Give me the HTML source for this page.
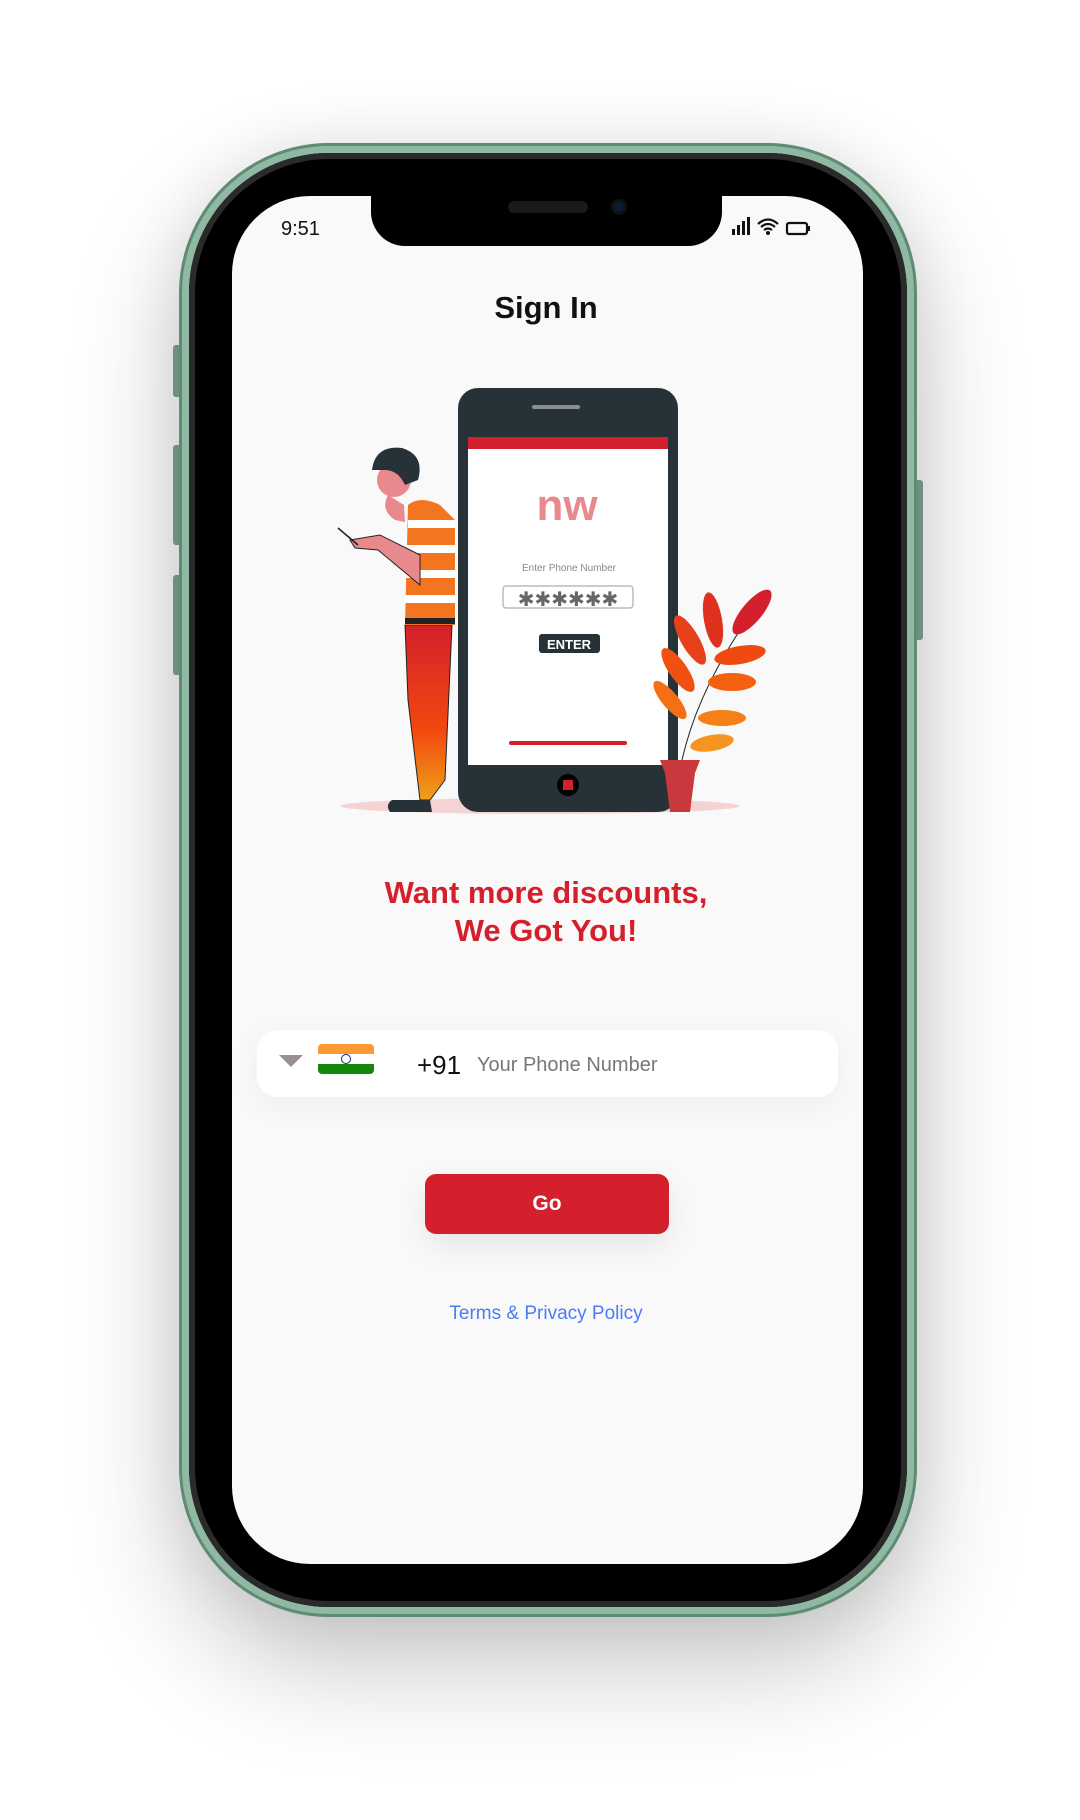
<!DOCTYPE html>
<html><head><meta charset="utf-8"><style>
*{margin:0;padding:0;box-sizing:border-box}
body{width:1080px;height:1820px;background:#fff;position:relative;overflow:hidden;font-family:"Liberation Sans",sans-serif}
.frame{position:absolute;left:179px;top:143px;width:738px;height:1474px;border-radius:150px;background:#8fb9a3;border:3px solid #5f8a74;box-shadow:0 50px 110px rgba(0,0,0,0.22),0 0 60px rgba(0,0,0,0.08)}
.bezel{position:absolute;left:189px;top:153px;width:718px;height:1454px;border-radius:140px;background:#000;box-shadow:inset 0 0 0 6px #2a2a2a}
.screen{position:absolute;left:232px;top:196px;width:631px;height:1368px;border-radius:78px;background:#f9f9f9;overflow:hidden}
.notch{position:absolute;left:371px;top:180px;width:351px;height:66px;background:#000;border-radius:0 0 34px 34px}
.btn{position:absolute;background:#7ea891;border-radius:3px}
.t{position:absolute;white-space:nowrap}
</style></head><body>
<div class="btn" style="left:173px;top:345px;width:8px;height:52px"></div>
<div class="btn" style="left:173px;top:445px;width:8px;height:100px"></div>
<div class="btn" style="left:173px;top:575px;width:8px;height:100px"></div>
<div class="btn" style="left:915px;top:480px;width:8px;height:160px"></div>
<div class="frame"></div>
<div class="bezel"></div>
<div class="screen"></div>
<div class="notch"></div>
<div style="position:absolute;left:508px;top:201px;width:80px;height:12px;border-radius:6px;background:#1a1a1a"></div>
<div style="position:absolute;left:611px;top:199px;width:16px;height:16px;border-radius:50%;background:#0b1a33;border:3px solid #111"></div>

<div class="t" style="left:281px;top:218px;font-size:20px;color:#111">9:51</div>
<svg style="position:absolute;left:730px;top:215px" width="90" height="24" viewBox="0 0 90 24">
<rect x="2" y="14" width="3" height="6" fill="#111"/><rect x="7" y="10" width="3" height="10" fill="#111"/><rect x="12" y="6" width="3" height="14" fill="#111"/><rect x="17" y="2" width="3" height="18" fill="#111"/>
<path d="M28 9 Q38 0 48 9 M31 12 Q38 6 45 12 M34 15 Q38 12 42 15" stroke="#111" stroke-width="2.2" fill="none"/><circle cx="38" cy="18" r="2" fill="#111"/>
<rect x="57" y="8" width="20" height="11" rx="2" fill="none" stroke="#111" stroke-width="2.2"/><rect x="78" y="11" width="2" height="5" fill="#111"/>
</svg>

<div class="t" style="left:0;width:1092px;text-align:center;top:290px;font-size:31px;font-weight:bold;color:#111">Sign In</div>

<svg style="position:absolute;left:0;top:0" width="1080" height="840" viewBox="0 0 1080 840">
<ellipse cx="540" cy="806" rx="200" ry="8" fill="#f6d3d3"/>
<rect x="458" y="388" width="220" height="424" rx="20" fill="#273238"/>
<rect x="532" y="405" width="48" height="4" rx="2" fill="#8a8f93"/>
<rect x="468" y="437" width="200" height="328" fill="#fff"/>
<rect x="468" y="437" width="200" height="12" fill="#d4202c"/>
<text x="567" y="520" font-size="44" font-family="Liberation Sans" font-weight="bold" fill="#e8898e" text-anchor="middle">nw</text>
<text x="569" y="571" font-size="10" font-family="Liberation Sans" fill="#888" text-anchor="middle">Enter Phone Number</text>
<rect x="503" y="586" width="130" height="22" rx="3" fill="#fff" stroke="#bbb" stroke-width="1.5"/>
<text x="568" y="606" font-size="20" font-family="Liberation Sans" fill="#666" text-anchor="middle">✱✱✱✱✱✱</text>
<rect x="539" y="634" width="61" height="19" rx="3" fill="#273238"/>
<text x="569" y="649" font-size="13" font-family="Liberation Sans" font-weight="bold" fill="#fff" text-anchor="middle">ENTER</text>
<rect x="509" y="741" width="118" height="4" rx="2" fill="#d4202c"/>
<circle cx="568" cy="785" r="11" fill="#000"/><rect x="563" y="780" width="10" height="10" fill="#d4202c"/>
<defs><linearGradient id="pg" x1="0" y1="0" x2="0" y2="1"><stop offset="0" stop-color="#d4202c"/><stop offset="0.6" stop-color="#f2480e"/><stop offset="1" stop-color="#f0a01a"/></linearGradient></defs>
<path d="M405 625 L452 625 L445 780 L430 800 L420 800 L408 700 Z" fill="url(#pg)" stroke="#222" stroke-width="1"/>
<path d="M408 505 Q420 495 440 505 L455 520 L455 625 L405 625 Z" fill="#f47520"/>
<g fill="#fff"><rect x="408" y="520" width="47" height="8"/><rect x="407" y="545" width="48" height="8"/><rect x="406" y="570" width="49" height="8"/><rect x="405" y="595" width="50" height="8"/></g>
<rect x="405" y="618" width="50" height="6" fill="#222"/>
<path d="M420 555 L380 535 L350 540 L355 548 L378 550 L420 585 Z" fill="#e8898e" stroke="#222" stroke-width="1"/>
<path d="M338 528 L358 545" stroke="#222" stroke-width="1.5"/>
<path d="M395 520 Q380 510 388 495 L404 505 L405 522 Z" fill="#e8898e"/>
<circle cx="394" cy="480" r="17" fill="#e8898e"/>
<path d="M372 470 Q375 445 402 448 Q425 455 418 480 L405 485 Q398 470 385 470 Z" fill="#273238"/>
<path d="M392 800 L430 800 L432 812 L390 812 Q385 805 392 800Z" fill="#273238"/>
<g stroke="#222" stroke-width="1" fill="none"><path d="M682 760 Q700 680 765 595"/></g>
<g>
<ellipse cx="752" cy="612" rx="10" ry="28" transform="rotate(40 752 612)" fill="#d4202c"/>
<ellipse cx="713" cy="620" rx="9" ry="28" transform="rotate(-10 713 620)" fill="#e0301e"/>
<ellipse cx="690" cy="640" rx="9" ry="28" transform="rotate(-30 690 640)" fill="#e8401a"/>
<ellipse cx="740" cy="655" rx="26" ry="9" transform="rotate(-10 740 655)" fill="#f04a10"/>
<ellipse cx="678" cy="670" rx="9" ry="26" transform="rotate(-35 678 670)" fill="#f05010"/>
<ellipse cx="732" cy="682" rx="24" ry="9" fill="#f56010"/>
<ellipse cx="670" cy="700" rx="8" ry="24" transform="rotate(-40 670 700)" fill="#f57015"/>
<ellipse cx="722" cy="718" rx="24" ry="8" fill="#f58015"/>
<ellipse cx="712" cy="743" rx="22" ry="8" transform="rotate(-10 712 743)" fill="#f59520"/>
</g>
<path d="M660 760 L700 760 L695 773 L690 812 L670 812 L665 773 Z" fill="#c8383c"/>
</svg>

<div class="t" style="left:0;width:1092px;text-align:center;top:874px;font-size:31px;line-height:38px;font-weight:bold;color:#d4202c">Want more discounts,<br>We Got You!</div>

<div style="position:absolute;left:257px;top:1030px;width:581px;height:67px;border-radius:20px;background:#fff;box-shadow:0 8px 30px rgba(0,0,0,0.05)"></div>
<svg style="position:absolute;left:279px;top:1055px" width="24" height="14"><path d="M0 0 L24 0 L12 12 Z" fill="#9a9090"/></svg>
<div style="position:absolute;left:318px;top:1044px;width:56px;height:30px;border-radius:4px;overflow:hidden">
<div style="height:10px;background:#ff9933"></div><div style="height:10px;background:#fff;position:relative"><div style="position:absolute;left:23px;top:0;width:10px;height:10px;border:1.5px solid #1a237e;border-radius:50%"></div></div><div style="height:10px;background:#138808"></div></div>
<div class="t" style="left:417px;top:1050px;font-size:26px;color:#111">+91</div>
<div class="t" style="left:477px;top:1054px;font-size:20px;color:#777">Your Phone Number</div>

<div style="position:absolute;left:425px;top:1174px;width:244px;height:60px;border-radius:11px;background:#d4202c;box-shadow:0 12px 30px rgba(0,0,0,0.08)"></div>
<div class="t" style="left:425px;width:244px;text-align:center;top:1192px;font-size:21px;font-weight:bold;color:#fff">Go</div>

<div class="t" style="left:0;width:1092px;text-align:center;top:1303px;font-size:19px;color:#4a7cf5">Terms &amp; Privacy Policy</div>
</body></html>
